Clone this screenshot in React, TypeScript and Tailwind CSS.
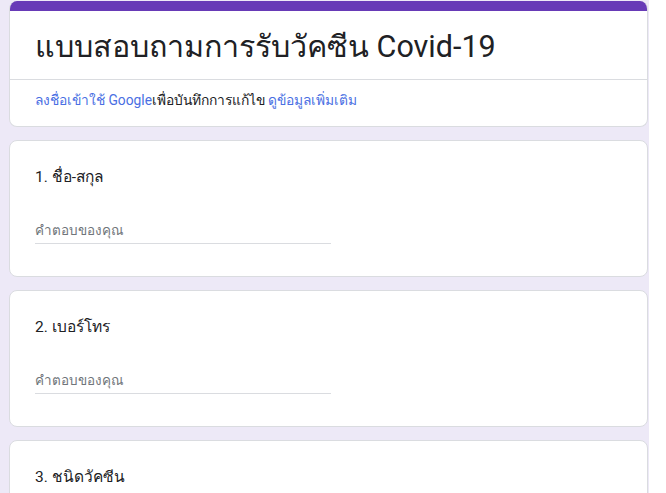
import React from "react";

const questions = ["1. ชื่อ-สกุล", "2. เบอร์โทร", "3. ชนิดวัคซีน"];

function QuestionCard({ title, last }: { title: string; last?: boolean }) {
  return (
    <div className="bg-white rounded-lg border border-[#dadce0] pt-6 pb-8 pl-[25px] pr-6">
      <div className="text-[15.5px] leading-6 text-[#202124]">{title}</div>
      {!last && (
        <div className="mt-[31px] w-[296px] border-b border-[#dadce0] pb-[3px] text-[13.5px] leading-5 text-[#70757a]">
          คำตอบของคุณ
        </div>
      )}
    </div>
  );
}

export default function App() {
  return (
    <div
      className="flex h-[493px] w-[666px] overflow-hidden bg-white"
      style={{ fontFamily: "Roboto, 'Noto Sans', 'DejaVu Sans', sans-serif" }}
    >
      <div className="w-[649px] bg-[#ede9f7] pl-[9px] pr-[1px] pt-px">
        <div className="flex flex-col gap-[13px]">
          <div className="overflow-hidden rounded-lg border border-t-0 border-[#dadce0] bg-white">
            <div className="h-[10px] bg-[#673ab7]" />
            <div className="h-[68px] pl-[25px] pt-[18px] text-[30.5px] leading-9 text-[#202124]">
              แบบสอบถามการรับวัคซีน Covid-19
            </div>
            <div className="border-t border-[#dadce0] h-[47px] pl-[25px] pt-[10px] text-[13.8px] leading-5">
              <span className="text-[#4a6fe3]">ลงชื่อเข้าใช้ Google</span>
              <span className="text-[#202124]">เพื่อบันทึกการแก้ไข</span>{" "}
              <span className="text-[#4a6fe3]">ดูข้อมูลเพิ่มเติม</span>
            </div>
          </div>
          {questions.map((q, i) => (
            <QuestionCard key={q} title={q} last={i === questions.length - 1} />
          ))}
        </div>
      </div>
    </div>
  );
}
